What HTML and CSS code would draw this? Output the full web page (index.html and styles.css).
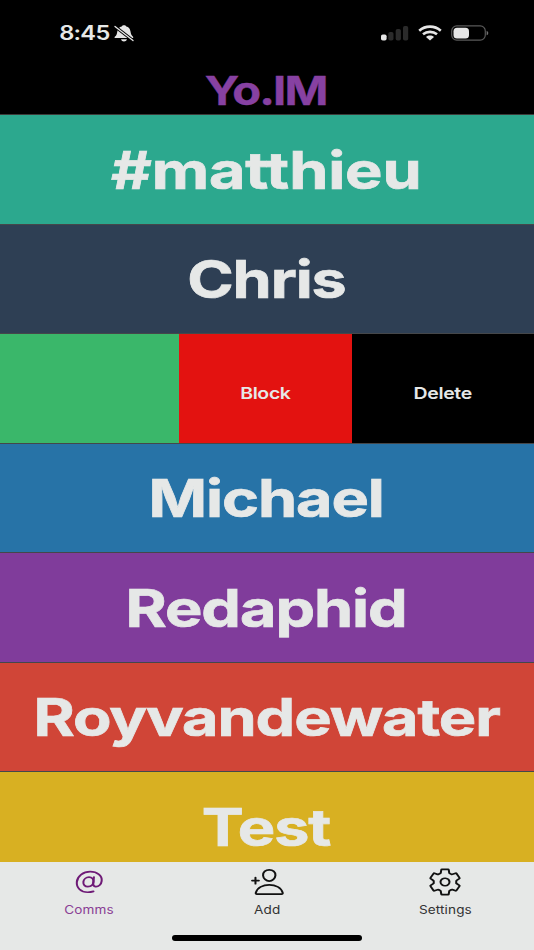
FILE: index.html
```html
<!DOCTYPE html>
<html lang="en">
  <head>
    <meta charset="utf-8">
    <title>Yo.IM</title>
    <link rel="stylesheet" href="styles.css">
  </head>
  <body>
    <div class="status">
      <div class="clock">
        <span class="time">8:45</span>
        <svg class="bell" viewBox="0 0 20 17" preserveAspectRatio="none">
          <path fill="#e6e6e6" d="M.8 11.700c2-1.500 2-2.800 2.500-5.300C4 3.600 5.500 2 7.700 1.600 8 .5 9 .2 10 .2s2 .3 2.300 1.400C14.500 2 16 3.600 16.500 6.400c.5 2.500.7 3.600 2.500 5.300.6.800.2 1.400-.8 1.400H1.600C.6 13.100.2 12.400.8 11.700zM7 14.200h6c-.5 1.600-1.600 2.200-3 2.200s-2.500-.6-3-2.200z"/>
          <path stroke="#000" stroke-width="3" d="M1 1.500 19 15.500"/>
          <path stroke="#e6e6e6" stroke-width="1.300" stroke-linecap="round" d="M1 1.500 19 15.500"/>
        </svg>
      </div>
      <div class="indicators">
        <svg class="signal" viewBox="0 0 28 16">
          <rect x="0" y="9.500" width="5.600" height="6" rx="1.800" fill="#e6e6e6"/>
          <g fill="#2b2b2b">
            <rect x="7.300" y="7" width="5.200" height="8.500" rx="1.800"/>
            <rect x="14.700" y="4" width="5.200" height="11.500" rx="1.800"/>
            <rect x="22" y="1" width="5.200" height="14.500" rx="1.800"/>
          </g>
        </svg>
        <svg class="wifi" viewBox="0 0 24 16" preserveAspectRatio="none">
          <g fill="none" stroke="#e6e6e6" stroke-width="2.600">
            <path d="M1.200 5.700C7.500.3 16.500.3 22.800 5.700"/>
            <path d="M5 9.300c4-3.300 10-3.300 14 0"/>
          </g>
          <path fill="#e6e6e6" d="M8 12c2.400-1.900 5.600-1.900 8 0l-4 3.400z"/>
        </svg>
        <svg class="battery" viewBox="0 0 38 16">
          <rect x=".7" y=".9" width="33.600" height="14.200" rx="5" fill="none" stroke="#595959" stroke-width="1.200"/>
          <rect x="2.500" y="2.700" width="15.500" height="10.800" rx="3.500" fill="#e6e6e6"/>
          <path d="M35.600 5.700c2.200.8 2.200 3.800 0 4.600z" fill="#707070"/>
        </svg>
      </div>
    </div>
    <header class="title"><span>Yo.IM</span></header>

    <main class="list">
      <div class="row teal"><span class="name">#matthieu</span></div>
      <div class="row navy"><span class="name">Chris</span></div>
      <div class="row swiped">
        <div class="rest"></div>
        <div class="action block"><span>Block</span></div>
        <div class="action delete"><span>Delete</span></div>
      </div>
      <div class="row blue"><span class="name">Michael</span></div>
      <div class="row purple"><span class="name">Redaphid</span></div>
      <div class="row red"><span class="name">Royvandewater</span></div>
      <div class="row yellow"><span class="name">Test</span></div>
    </main>

    <nav class="tabs">
      <div class="tab active">
        <svg viewBox="0 0 512 512" preserveAspectRatio="none">
          <path d="M320 254.300c-4.500 51.100-40.100 80-80.500 80s-67.400-28.900-63.500-80c4.100-46.800 40-80 80.400-80s68.100 33.200 63.600 80z"/>
          <path d="M319.800 415.800c-28.600 12-53.300 15.100-82.800 15.100-97.200 0-162.600-78.900-153.900-176.300S171.400 80.100 273.300 80.100c101.700 0 171.500 71 163.100 155.400-5 62.700-45.900 104.800-88.200 98.800-27-5-35-29-32-55l10-105"/>
        </svg>
        <span>Comms</span>
      </div>
      <div class="tab">
        <svg viewBox="0 0 512 512" preserveAspectRatio="none">
          <path d="M376 144c-3.920 52.870-44 96-88 96s-84.150-43.120-88-96c-4-55 35-96 88-96s92 42 88 96z"/>
          <path d="M288 304c-87 0-175.300 48-191.640 138.600-2 10.920 4.210 21.400 15.650 21.400H464c11.440 0 17.620-10.480 15.650-21.400C463.300 352 375 304 288 304z"/>
          <path d="M92 180v104M140 232H44"/>
        </svg>
        <span>Add</span>
      </div>
      <div class="tab">
        <svg viewBox="0 0 512 512" preserveAspectRatio="none">
          <path d="M262.290 192.310a64 64 0 1 0 57.400 57.400 64.130 64.130 0 0 0-57.400-57.400zM416.390 256a154.340 154.340 0 0 1-1.530 20.790l45.210 35.460a10.810 10.810 0 0 1 2.450 13.750l-42.770 74a10.810 10.810 0 0 1-13.140 4.590l-44.900-18.080a16.110 16.110 0 0 0-15.170 1.750A164.480 164.480 0 0 1 325 400.800a15.940 15.940 0 0 0-8.820 12.140l-6.730 47.890a11.080 11.080 0 0 1-10.680 9.170h-85.540a11.110 11.110 0 0 1-10.690-8.870l-6.720-47.820a16.070 16.070 0 0 0-9-12.220 155.300 155.300 0 0 1-21.460-12.570 16 16 0 0 0-15.110-1.710l-44.890 18.070a10.810 10.810 0 0 1-13.140-4.580l-42.770-74a10.800 10.800 0 0 1 2.450-13.750l38.210-30a16.050 16.050 0 0 0 6-14.080c-.36-4.170-.58-8.330-.58-12.500s.21-8.270.58-12.350a16 16 0 0 0-6.070-13.940l-38.190-30A10.810 10.810 0 0 1 49.480 186l42.770-74a10.810 10.810 0 0 1 13.140-4.590l44.900 18.080a16.110 16.110 0 0 0 15.170-1.750A164.480 164.480 0 0 1 187 111.200a15.940 15.940 0 0 0 8.820-12.140l6.730-47.890A11.080 11.080 0 0 1 213.230 42h85.540a11.110 11.110 0 0 1 10.690 8.870l6.720 47.820a16.070 16.070 0 0 0 9 12.220 155.300 155.300 0 0 1 21.460 12.570 16 16 0 0 0 15.110 1.710l44.890-18.070a10.810 10.810 0 0 1 13.140 4.580l42.770 74a10.800 10.800 0 0 1-2.450 13.750l-38.210 30a16.050 16.050 0 0 0-6.050 14.080c.33 4.140.55 8.300.55 12.470z"/>
        </svg>
        <span>Settings</span>
      </div>
      <div class="home"></div>
    </nav>
  </body>
</html>
```
FILE: styles.css
```css
* {
  margin: 0;
  padding: 0;
  box-sizing: border-box;
}
body {
  display: flex;
  flex-direction: column;
  height: 950px;
  overflow: hidden;
  background: #000;
  color: #e6e8e7;
  font-family: Inter, "Liberation Sans", sans-serif;
}

/* lettering is set wide across the whole app */
.time,
.title span,
.name,
.action span,
.tab span {
  display: inline-block;
  white-space: nowrap;
  transform: scaleX(1.18);
}

.status {
  display: flex;
  justify-content: space-between;
  align-items: center;
  height: 66px;
  padding: 0 45px 0 63px;
}
.clock,
.indicators {
  display: flex;
  align-items: center;
}
.clock {
  gap: 8px;
}
.time {
  font-size: 20px;
  line-height: 24px;
  font-weight: 600;
  letter-spacing: -0.6px;
}
.bell {
  width: 20px;
  height: 17px;
}
.indicators {
  gap: 9px;
}
.signal {
  width: 28px;
  height: 16px;
}
.wifi {
  width: 24px;
  height: 16px;
}
.battery {
  width: 38px;
  height: 16px;
}

.title {
  height: 48px;
  padding-right: 3px;
  text-align: center;
  color: #8741a2;
  font-size: 40px;
  line-height: 49px;
  font-weight: 700;
  letter-spacing: -1.6px;
  -webkit-text-stroke: 0.4px;
}

.list {
  flex: none;
  height: 748px;
  border-top: 1px solid #3c3c3a;
  overflow: hidden;
}
.row {
  display: flex;
  justify-content: center;
  align-items: center;
  height: 109.5px;
  border-bottom: 1px solid #45474a;
}
.name {
  padding: 3px 1px 0 0;
  font-size: 52px;
  line-height: 64px;
  font-weight: 700;
  letter-spacing: -0.9px;
  transform: scaleX(1.21);
  -webkit-text-stroke: 0.7px;
}
.teal .name {
  letter-spacing: -0.1px;
}
.teal { background: #2ca88e; }
.navy { background: #2e3f54; }
.blue { background: #2773a7; }
.purple { background: #803c9b; }
.red { background: #d04537; }
.yellow { background: #d8b022; }

.swiped {
  align-items: stretch;
}
.rest {
  width: 179px;
  background: #3ab76a;
}
.action {
  display: flex;
  justify-content: center;
  align-items: center;
  padding-top: 10px;
  font-size: 16.5px;
  font-weight: 600;
  letter-spacing: -0.3px;
}
.block {
  width: 173px;
  background: #e31210;
}
.delete {
  width: 182px;
  background: #000;
}

.tabs {
  display: grid;
  grid-template-columns: repeat(3, 1fr);
  grid-template-rows: 73px 6px;
  flex: 1;
  background: #e6e8e7;
  color: #333;
}
.tab {
  display: flex;
  flex-direction: column;
  align-items: center;
  padding-top: 5px;
}
.tab svg {
  width: 36px;
  height: 30px;
  fill: none;
  stroke: #111;
  stroke-width: 29;
  stroke-linecap: round;
  stroke-linejoin: round;
}
.tab span {
  margin-top: 5px;
  font-size: 11.5px;
  line-height: 16px;
  letter-spacing: 0.1px;
}
.active {
  color: #8a4095;
}
.active svg {
  stroke: #6e1a76;
}
.home {
  grid-column: 1 / 4;
  justify-self: center;
  width: 190px;
  height: 6px;
  border-radius: 3px;
  background: #000;
}
```
